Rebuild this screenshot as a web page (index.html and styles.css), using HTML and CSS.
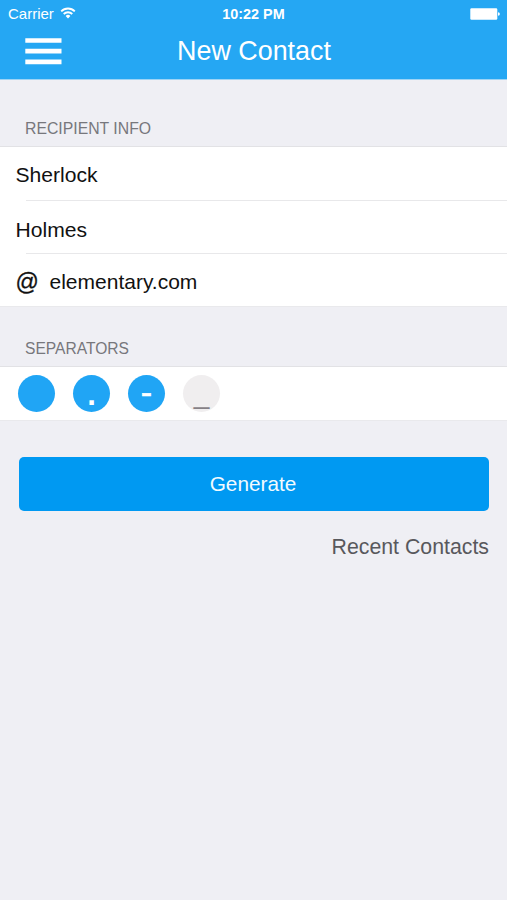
FILE: index.html
```html
<!DOCTYPE html>
<html lang="en">
<head>
    <meta charset="UTF-8">
    <meta name="viewport" content="width=device-width, initial-scale=1.0">
    <title>New Contact</title>
    <link rel="stylesheet" href="styles.css">
</head>
<body>
    <header class="header">
        <div class="status-bar">
            <div class="carrier">
                <span>Carrier</span>
                <svg class="wifi" width="16" height="12" viewBox="0 0 16 12">
                    <path d="M1.2 4.3 A9.6 9.6 0 0 1 14.8 4.3" fill="none" stroke="#fff" stroke-width="1.9"/>
                    <path d="M3.7 7 A6.1 6.1 0 0 1 12.3 7" fill="none" stroke="#fff" stroke-width="1.8"/>
                    <path d="M5.6 9 A3.4 3.4 0 0 1 10.4 9 L8 11.5 Z" fill="#fff"/>
                </svg>
            </div>
            <div class="time">10:22 PM</div>
            <div class="battery">
                <svg width="30" height="12" viewBox="0 0 30 12">
                    <rect x="0.3" y="0.2" width="27" height="11.6" rx="1.2" fill="#fff"/>
                    <path d="M28 4.2 Q29.9 4.5 29.9 6 Q29.9 7.5 28 7.8 Z" fill="#fff"/>
                </svg>
            </div>
        </div>
        <div class="nav">
            <button class="menu-button" aria-label="Menu">
                <svg width="37" height="27" viewBox="0 0 37 27">
                    <path d="M0.3 0.2 H36.5 V4.8 H0.3 Z M0.3 10.8 H36.5 V15.4 H0.3 Z M0.3 21.6 H36.5 V26.2 H0.3 Z" fill="#fff"/>
                </svg>
            </button>
            <h1>New Contact</h1>
        </div>
    </header>
    <main>
        <h2 class="section-title">RECIPIENT INFO</h2>
        <div class="group">
            <div class="row first-name">Sherlock</div>
            <div class="row last-name">Holmes</div>
            <div class="row domain"><span class="at">@</span>elementary.com</div>
        </div>
        <h2 class="section-title separators-title">SEPARATORS</h2>
        <div class="group separators">
            <button class="separator" aria-label="None"></button>
            <button class="separator"><span class="dot">.</span></button>
            <button class="separator"><span class="dash">-</span></button>
            <button class="separator off"><span class="underscore">_</span></button>
        </div>
        <button class="generate">Generate</button>
        <a class="recent">Recent Contacts</a>
    </main>
</body>
</html>
```

FILE: styles.css
```css
* {
    box-sizing: border-box;
}

body {
    margin: 0;
    min-height: 100vh;
    background-color: #efeff4;
    font-family: "Liberation Sans", Arial, sans-serif;
    color: #111;
}

button {
    border: none;
    padding: 0;
    font-family: inherit;
    cursor: pointer;
}

/* Header */
.header {
    height: 80px;
    background-color: #25a7f3;
    border-bottom: 1px solid #9dd4f5;
    color: #fff;
}

.status-bar {
    display: grid;
    grid-template-columns: 1fr auto 1fr;
    align-items: center;
    height: 27px;
    padding: 0 7px 0 8px;
}

.carrier {
    display: flex;
    align-items: center;
    gap: 6px;
    font-size: 15px;
}

.wifi {
    margin-top: -2px;
}

.time {
    margin-right: 1px;
    font-size: 14.4px;
    font-weight: bold;
}

.battery {
    display: flex;
    justify-content: flex-end;
}

.nav {
    display: grid;
    grid-template-columns: 62px 1fr 61px;
    align-items: center;
    height: 48px;
}

.menu-button {
    display: flex;
    width: 37px;
    margin-left: 25px;
    background: none;
}

.nav h1 {
    margin: 0;
    font-size: 26.9px;
    font-weight: normal;
    text-align: center;
}

/* Form */
.section-title {
    margin: 0;
    padding: 40px 25px 0 25px;
    height: 66px;
    font-size: 15.8px;
    line-height: 18px;
    font-weight: normal;
    color: #77777c;
}

.separators-title {
    height: 59px;
    padding-top: 33px;
    font-size: 15.6px;
}

.group {
    background-color: #fff;
    border-top: 1px solid #e2e2e5;
    border-bottom: 1px solid #e9e9ec;
}

.row {
    display: flex;
    align-items: center;
    padding-left: 15.5px;
    font-size: 21.1px;
    background: linear-gradient(#e8e8ea, #e8e8ea) 26px 100% / 100% 1px no-repeat;
}

.first-name {
    height: 54px;
    padding-top: 1px;
}

.last-name {
    height: 53px;
    padding-top: 5px;
}

.domain {
    height: 52px;
    padding-top: 4px;
    background: none;
    font-size: 21px;
}

.at {
    width: 34px;
    font-size: 23px;
    -webkit-text-stroke: 0.3px #111;
}

.separators {
    display: flex;
    align-items: center;
    gap: 18px;
    height: 55px;
    padding-left: 18px;
}

.separator {
    display: flex;
    align-items: center;
    justify-content: center;
    width: 37px;
    height: 37px;
    border-radius: 50%;
    background-color: #20a5f5;
    color: #fff;
    line-height: 30px;
}

.separator.off {
    background-color: #f0eeef;
    color: #858085;
}

.dot {
    margin-top: 2px;
    font-size: 31px;
    font-weight: bold;
}

.dash {
    margin-top: -3px;
    font-size: 34px;
    -webkit-text-stroke: 0.6px #fff;
}

.underscore {
    font-size: 28px;
}

.generate {
    display: block;
    width: 470px;
    height: 54px;
    margin: 36px 0 0 19px;
    padding-right: 2px;
    padding-bottom: 1px;
    border-radius: 5px;
    background-color: #0099f2;
    color: #f2fbff;
    font-size: 20.8px;
}

.recent {
    display: block;
    margin: 24px 18px 0 0;
    text-align: right;
    font-size: 21.3px;
    line-height: 24px;
    color: #58585c;
}
```
